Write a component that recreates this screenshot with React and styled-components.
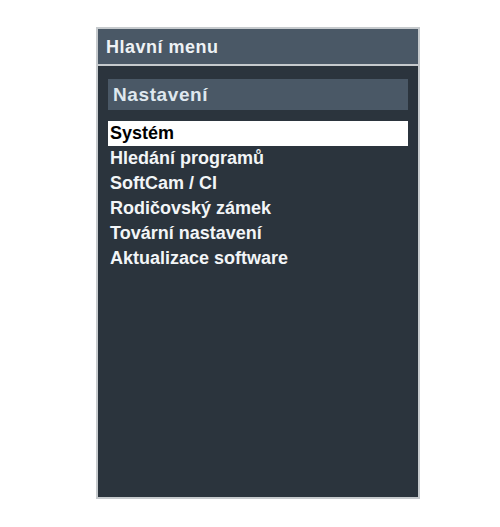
import React from "react";
import styled, {createGlobalStyle} from "styled-components";

const GlobalStyle = createGlobalStyle`
  html, body {
    margin: 0;
    background: #ffffff;
  }
  body {
    font-family: "Liberation Sans", Arial, sans-serif;
  }
`;

const Page = styled.div`
  padding: 27px 0 0 96px;
`;

const Frame = styled.div`
  width: 320px;
  height: 468px;
  border: 2px solid #c6cacd;
  background: #2b343d;
  display: flex;
  flex-direction: column;
`;

const Header = styled.div`
  height: 37px;
  background: #4a5866;
  border-bottom: 2px solid #c6cacd;
  color: #eef2f5;
  font-weight: bold;
  font-size: 18px;
  letter-spacing: 0.5px;
  display: flex;
  align-items: center;
  padding-left: 8px;
  padding-top: 1px;
  box-sizing: border-box;
`;

const Body = styled.div`
  padding: 13px 10px 0;
  display: flex;
  flex-direction: column;
`;

const Section = styled.div`
  height: 31px;
  background: #4a5866;
  color: #dfe8ef;
  font-weight: bold;
  font-size: 19px;
  letter-spacing: 0.6px;
  display: flex;
  align-items: center;
  padding-left: 5px;
  padding-top: 1px;
  box-sizing: border-box;
  margin-bottom: 11px;
`;

const List = styled.div`
  display: flex;
  flex-direction: column;
`;

const Item = styled.div`
  height: 25px;
  line-height: 25px;
  padding-left: 2px;
  font-weight: bold;
  font-size: 18px;
  background: ${p => (p.$active ? "#ffffff" : "transparent")};
  color: ${p => (p.$active ? "#000000" : "#f2f5f7")};
`;

const items = [
  "Systém",
  "Hledání programů",
  "SoftCam / CI",
  "Rodičovský zámek",
  "Tovární nastavení",
  "Aktualizace software",
];

const App = () => (
  <Page>
    <GlobalStyle/>
    <Frame>
      <Header>Hlavní menu</Header>
      <Body>
        <Section>Nastavení</Section>
        <List>
          {items.map((label, i) => (
            <Item key={label} $active={i === 0}>{label}</Item>
          ))}
        </List>
      </Body>
    </Frame>
  </Page>
);

export default App;
